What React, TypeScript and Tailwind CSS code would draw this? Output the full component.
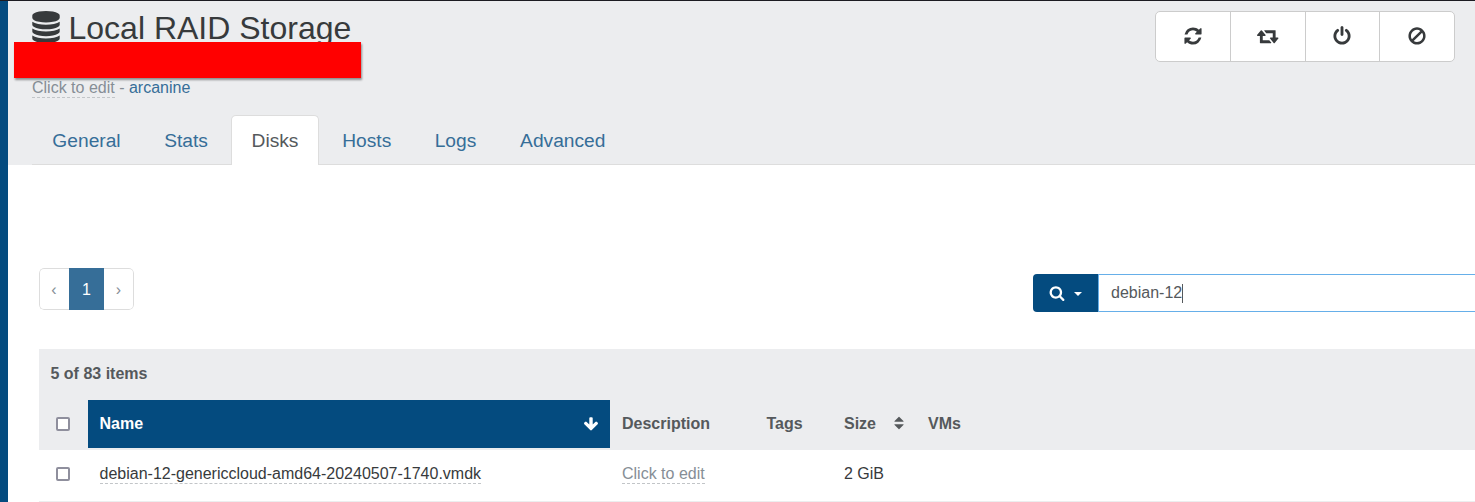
import React from "react";

const paths = {
  database:
    "M896 768q237 0 443-43t325-127v170q0 69-103 128t-280 93.5-385 34.5-385-34.5-280-93.5-103-128v-170q119 84 325 127t443 43zm0 768q237 0 443-43t325-127v170q0 69-103 128t-280 93.5-385 34.5-385-34.5-280-93.5-103-128v-170q119 84 325 127t443 43zm0-384q237 0 443-43t325-127v170q0 69-103 128t-280 93.5-385 34.5-385-34.5-280-93.5-103-128v-170q119 84 325 127t443 43zm0-1152q208 0 385 34.5t280 93.5 103 128v128q0 69-103 128t-280 93.5-385 34.5-385-34.5-280-93.5-103-128v-128q0-69 103-128t280-93.5 385-34.5z",
  refresh:
    "M1639 1056q0 5-1 7-64 268-268 434.5t-478 166.5q-146 0-282.5-55t-243.5-157l-129 129q-19 19-45 19t-45-19-19-45v-448q0-26 19-45t45-19h448q26 0 45 19t19 45-19 45l-137 137q71 66 161 102t187 36q134 0 250-65t186-179q11-17 53-117 8-23 30-23h192q13 0 22.5 9.5t9.5 22.5zm25-800v448q0 26-19 45t-45 19h-448q-26 0-45-19t-19-45 19-45l138-138q-148-137-349-137-134 0-250 65t-186 179q-11 17-53 117-8 23-30 23h-199q-13 0-22.5-9.5t-9.5-22.5v-7q65-268 270-434.5t480-166.5q146 0 284 55.5t245 156.5l130-129q19-19 45-19t45 19 19 45z",
  retweet:
    "M1280 1504q0 13-9.5 22.5t-22.5 9.5h-960q-8 0-13.5-2t-9-7-5.5-8-3-11.5-1-11.5v-600h-192q-26 0-45-19t-19-45q0-24 15-41l320-384q19-22 49-22t49 22l320 384q15 17 15 41 0 26-19 45t-45 19h-192v384h576q16 0 25 11l160 192q7 10 7 21zm640-416q0 24-15 41l-320 384q-20 23-49 23t-49-23l-320-384q-15-17-15-41 0-26 19-45t45-19h192v-384h-576q-16 0-25-12l-160-192q-7-9-7-20 0-13 9.5-22.5t22.5-9.5h960q8 0 13.5 2t9 7 5.5 8 3 11.5 1 11.5v600h192q26 0 45 19t19 45z",
  power:
    "M1664 896q0 156-61 298t-164 245-245 164-298 61-298-61-245-164-164-245-61-298q0-182 80.5-343t226.5-270q43-32 95.5-25t83.5 50q32 42 24.5 94.5t-49.5 84.5q-98 74-151.5 181t-53.5 228q0 104 40.5 198.5t109.5 163.5 163.5 109.5 198.5 40.5 198.5-40.5 163.5-109.5 109.5-163.5 40.5-198.5q0-121-53.5-228t-151.5-181q-42-32-49.5-84.5t24.5-94.5q31-43 84-50t95 25q146 109 226.5 270t80.5 343zm-640-768v640q0 52-38 90t-90 38-90-38-38-90v-640q0-52 38-90t90-38 90 38 38 90z",
  ban: "M1440 893q0-161-87-295l-754 753q137 89 297 89 111 0 211.5-43.5t173.5-116.5 116-174.5 43-212.5zm-999 299l755-754q-135-91-300-91-148 0-273 73t-198 199-73 274q0 162 89 299zm1223-299q0 157-61 300t-163.5 246-245 164-298.5 61-298.5-61-245-164-163.5-246-61-300 61-299.5 163.5-245.5 245-164 298.5-61 298.5 61 245 164 163.5 245.5 61 299.5z",
  search:
    "M1216 832q0-185-131.5-316.5t-316.5-131.5-316.5 131.5-131.5 316.5 131.5 316.5 316.5 131.5 316.5-131.5 131.5-316.5zm512 832q0 52-38 90t-90 38q-54 0-90-38l-343-342q-179 124-399 124-143 0-273.5-55.5t-225-150-150-225-55.5-273.5 55.5-273.5 150-225 225-150 273.5-55.5 273.5 55.5 225 150 150 225 55.5 273.5q0 220-124 399l343 343q37 37 37 90z",
  arrowDown:
    "M1675 832q0 53-37 90l-651 652q-39 37-91 37-53 0-90-37l-651-652q-38-36-38-90 0-53 38-91l74-75q39-37 91-37 53 0 90 37l294 294v-704q0-52 38-90t90-38h128q52 0 90 38t38 90v704l294-294q37-37 90-37 52 0 91 37l75 75q37 39 37 91z",
  sort: "M1408 1088q0 26-19 45l-448 448q-19 19-45 19t-45-19l-448-448q-19-19-19-45t19-45 45-19h896q26 0 45 19t19 45zm0-384q0 26-19 45t-45 19h-896q-26 0-45-19t-19-45 19-45l448-448q19-19 45-19t45 19l448 448q19 19 19 45z",
};

type IconName = keyof typeof paths;

function Icon({ name, className }: { name: IconName; className: string }) {
  return (
    <svg
      viewBox={name === "retweet" ? "0 0 1920 1792" : "0 0 1792 1792"}
      fill="currentColor"
      aria-hidden="true"
      className={`shrink-0 ${className}`}
    >
      <path d={paths[name]} />
    </svg>
  );
}

const actions: { name: IconName; size: string; width: string }[] = [
  { name: "refresh", size: "size-5", width: "w-[74px]" },
  { name: "retweet", size: "h-5 w-[21.5px]", width: "w-[75px]" },
  { name: "power", size: "size-5 mr-px", width: "w-[74px]" },
  { name: "ban", size: "size-5", width: "w-[75px]" },
];

const tabs = [
  { label: "General", width: "w-[109px]" },
  { label: "Stats", width: "w-[84px]" },
  { label: "Disks", width: "w-[88px]", active: true },
  { label: "Hosts", width: "w-[89.5px]" },
  { label: "Logs", width: "w-[82px]" },
  { label: "Advanced", width: "w-[126.5px]" },
];

function Editable({ children, className }: { children: React.ReactNode; className: string }) {
  return (
    <span className={`inline-block h-[19px] border-b border-dashed border-[#c2c5c8] leading-[18px] ${className}`}>
      {children}
    </span>
  );
}

function Checkbox() {
  return <span className="block size-3.5 rounded-[2px] border-2 border-[#8f8f9d] bg-white" />;
}

const columns = "grid grid-cols-[49px_522px_145px_77px_84px_1fr]";

export default function App() {
  return (
    <div
      className="flex h-[502px] w-full flex-col overflow-hidden bg-white text-base text-[#373a3c]"
      style={{ fontFamily: '"Liberation Sans", Arial, sans-serif' }}
    >
      <div className="h-px shrink-0 bg-[#1c1b22]" />
      <div className="flex min-h-0 flex-1">
        <nav className="w-2 shrink-0 bg-[#044b7f]" />
        <main className="min-w-0 flex-1">
          <header className="flex h-[164px] flex-col bg-[#ecedef]">
            <div className="flex h-[114px] justify-between pr-5 pl-6">
              <div className="relative">
                <h1 className="flex h-[41px] items-start text-[32px] leading-[35px]">
                  <Icon name="database" className="mt-[10.2px] -ml-[2px] mr-[6.5px] size-8" />
                  <span className="mt-[10px]">Local RAID Storage</span>
                </h1>
                <div className="absolute top-[41px] -left-[18px] h-9 w-[347px] bg-[#ff0000] shadow-[1px_2px_2px_rgba(0,0,0,0.4)]" />
                <p className="mt-[36px] leading-5">
                  <Editable className="text-[#868e96]">Click to edit</Editable>
                  <span className="text-[#868e96]"> - </span>
                  <a className="text-[#366e98]">arcanine</a>
                </p>
              </div>
              <div className="mt-2.5 flex h-[51px] w-[300px] overflow-hidden rounded-[5px] border border-[#ccc] bg-white">
                {actions.map((a, i) => (
                  <button
                    key={a.name}
                    className={`flex items-center justify-center border-[#ccc] pb-[2px] ${a.width} ${i > 0 ? "border-l" : ""}`}
                  >
                    <Icon name={a.name} className={a.size} />
                  </button>
                ))}
              </div>
            </div>
            <div className="ml-6 flex h-[50px] gap-[3px] border-b border-[#ddd]">
              {tabs.map((t) => (
                <a
                  key={t.label}
                  className={`flex h-[50px] justify-center rounded-t-[5px] border border-b-0 pt-[10px] text-[19.2px] leading-[29px] ${t.width} ${
                    t.active ? "border-[#ddd] bg-white text-[#55595c]" : "border-transparent text-[#366e98]"
                  }`}
                >
                  {t.label}
                </a>
              ))}
            </div>
          </header>

          <div className="flex h-[184px] items-start justify-between pt-[103px] pl-[31px]">
            <div className="flex h-[42px] w-[95px] overflow-hidden rounded-[5px] text-center leading-[42px]">
              <span className="w-[30px] rounded-l-[5px] border border-r-0 border-[#ddd] pr-px text-[#868e96]">‹</span>
              <span className="w-[35px] bg-[#366e98] pt-px text-white">1</span>
              <span className="w-[30px] rounded-r-[5px] border border-l-0 border-[#ddd] text-[#868e96]">›</span>
            </div>
            <div className="mt-[6px] flex h-[38px] w-[442px]">
              <button className="flex w-[65px] items-center rounded-l-[4px] bg-[#044b7f] pl-4 text-white">
                <Icon name="search" className="size-4" />
                <span className="mt-[2px] ml-[9px] border-x-[4px] border-t-[4px] border-x-transparent border-t-white" />
              </button>
              <div className="flex flex-1 items-center border border-r-0 border-[#66afe9] pl-3 text-[#55595c]">
                <span>debian-12</span>
                <span className="h-[19px] w-px bg-[#55595c]" />
              </div>
            </div>
          </div>

          <section className="ml-[31px]">
            <div className="h-[51px] bg-[#ecedef] pl-[11.5px] leading-[49px] font-bold text-[#55595c]">5 of 83 items</div>
            <div className={`${columns} h-[50px] bg-[#ecedef] leading-[47px] font-bold text-[#55595c]`}>
              <div className="pt-[17px] pl-[17px]">
                <Checkbox />
              </div>
              <div className="flex h-12 items-start justify-between bg-[#044b7f] pr-[11.5px] pl-[11.5px] text-white">
                <span>Name</span>
                <Icon name="arrowDown" className="mt-[15.5px] size-4" />
              </div>
              <div className="pl-3">Description</div>
              <div className="pl-[11.5px]">Tags</div>
              <div className="flex pl-3">
                Size
                <Icon name="sort" className="mt-[15px] ml-[15.3px] size-4" />
              </div>
              <div className="pl-3">VMs</div>
            </div>
            <div className={`${columns} h-[51px] leading-5`}>
              <div className="pt-[17px] pl-[17px]">
                <Checkbox />
              </div>
              <div className="pt-[14px] pl-[11.5px]">
                <Editable className="">debian-12-genericcloud-amd64-20240507-1740.vmdk</Editable>
              </div>
              <div className="pt-[14px] pl-3">
                <Editable className="text-[#868e96]">Click to edit</Editable>
              </div>
              <div />
              <div className="pl-3 leading-[47px]">2 GiB</div>
              <div />
            </div>
            <div className="h-px bg-[#eceeef]" />
          </section>
        </main>
      </div>
    </div>
  );
}
